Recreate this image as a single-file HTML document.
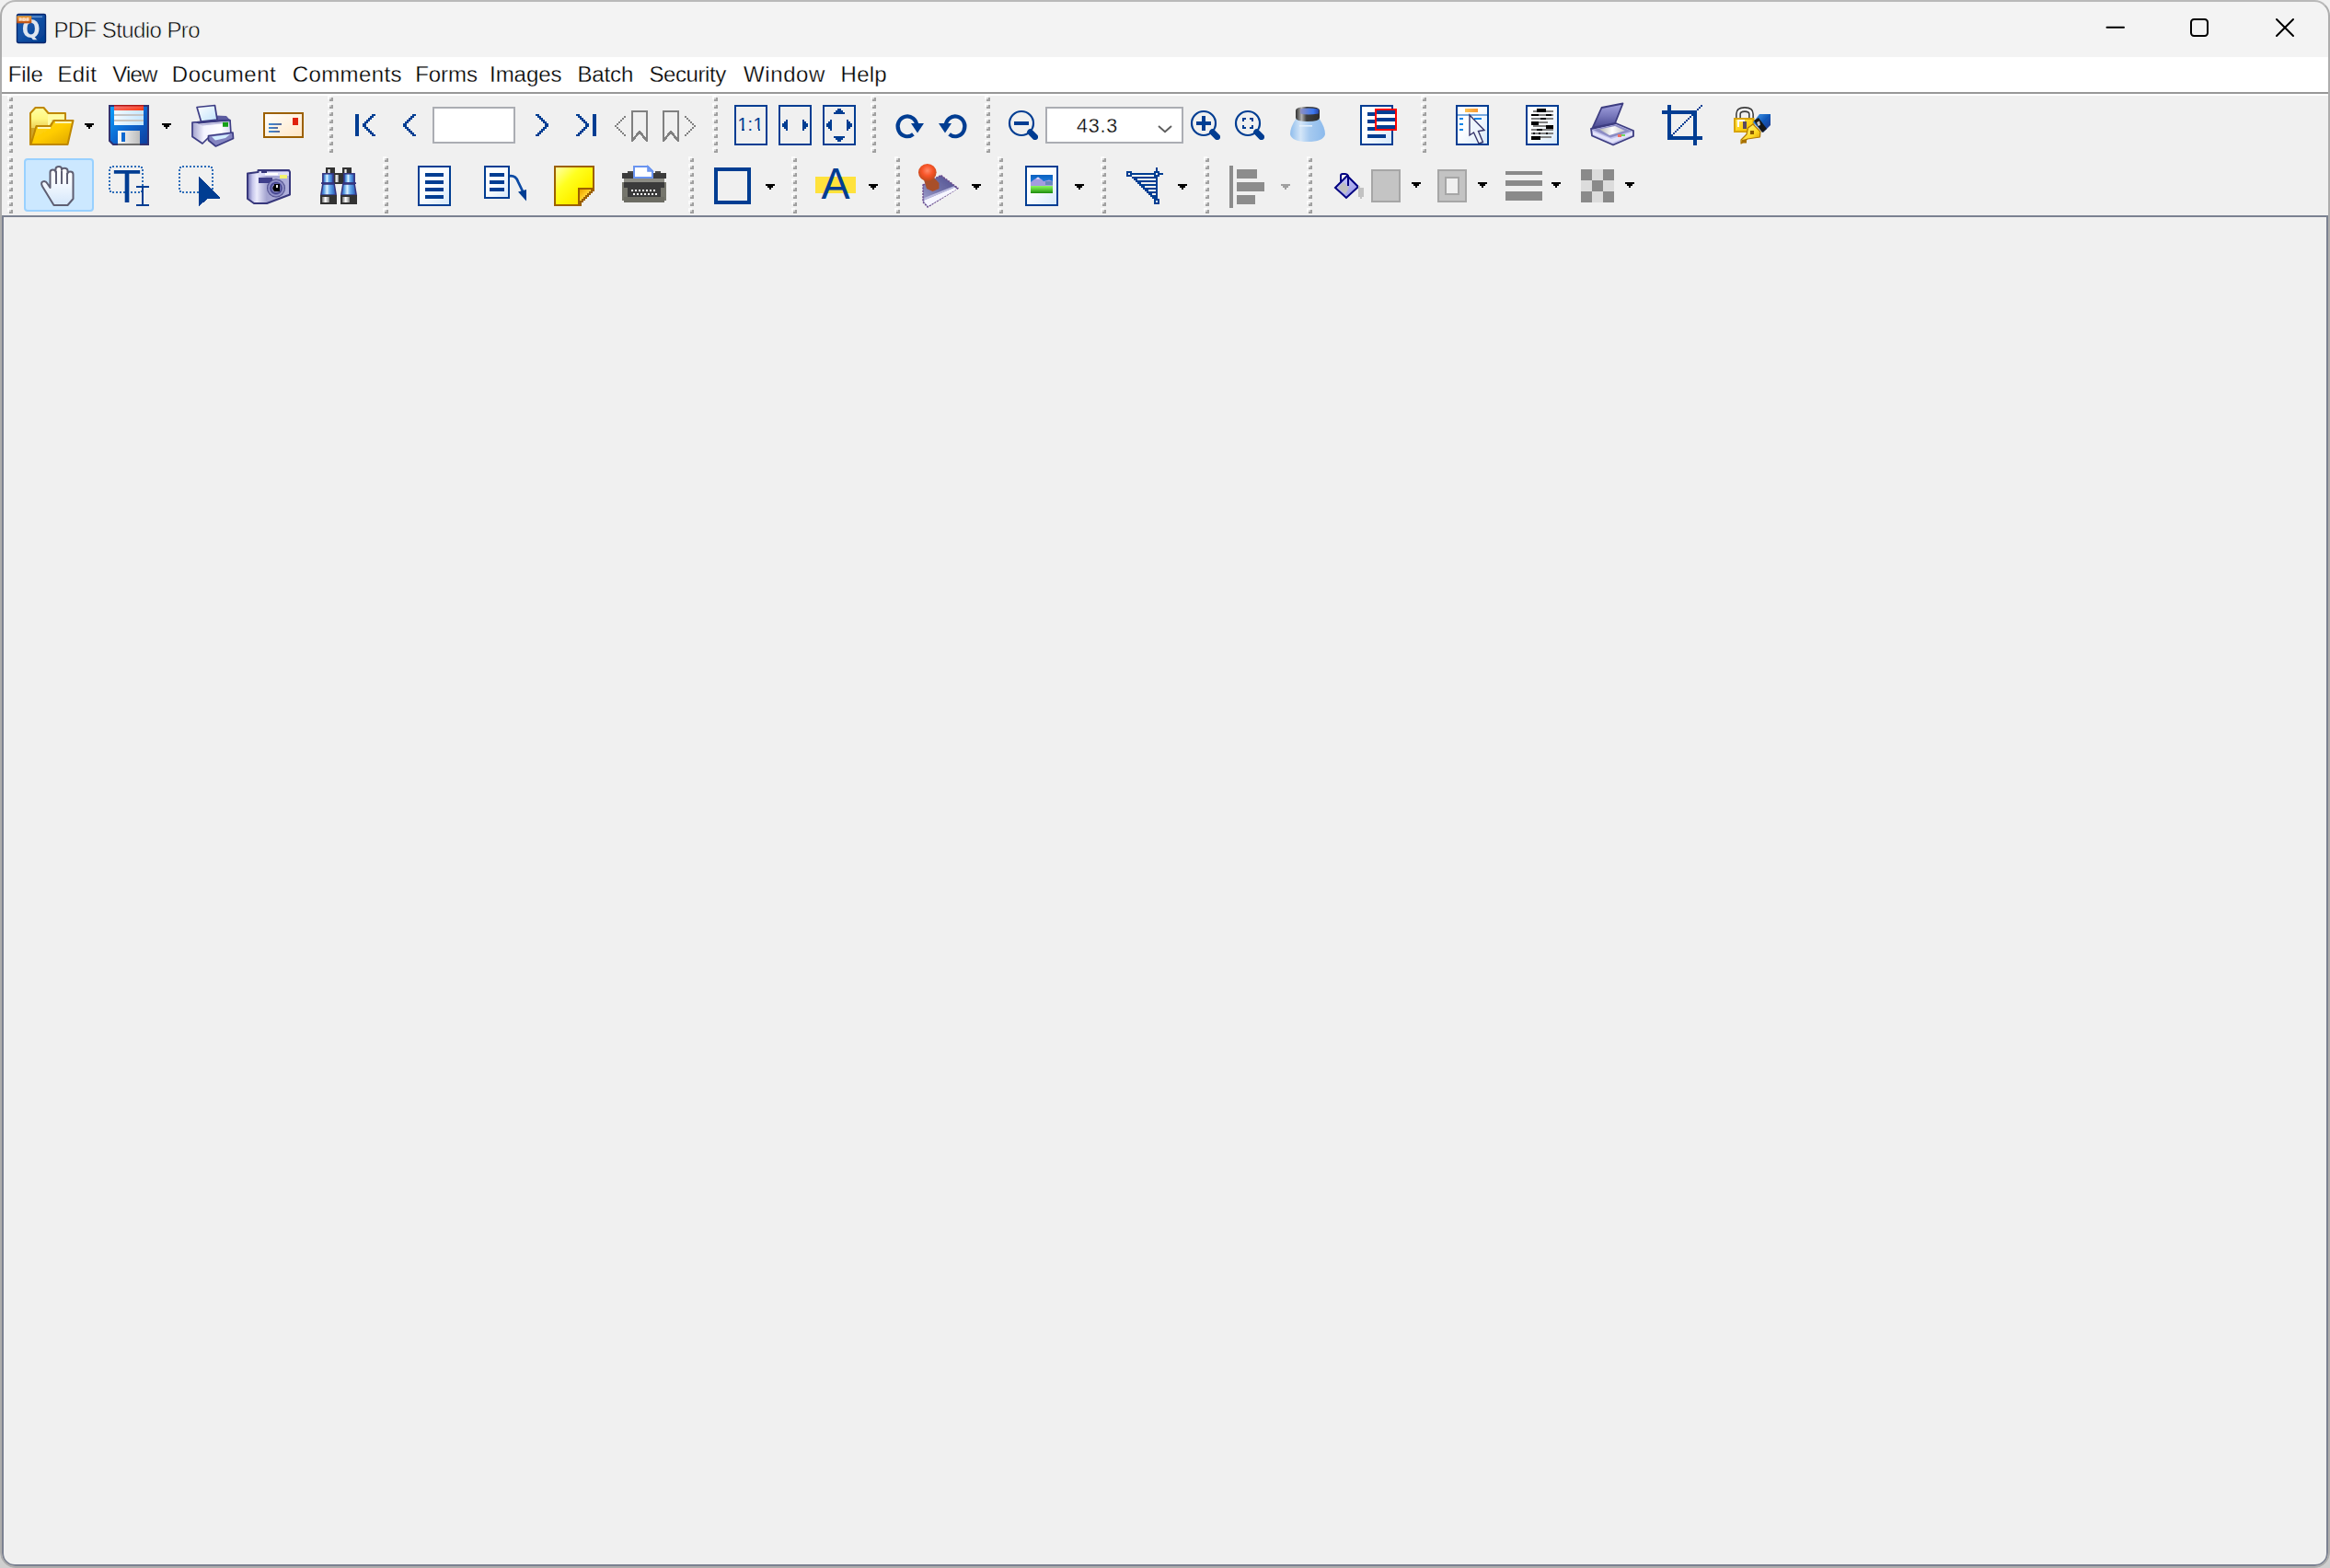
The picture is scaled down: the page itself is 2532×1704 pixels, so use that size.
<!DOCTYPE html>
<html lang="en"><head><meta charset="utf-8"><title>PDF Studio Pro</title>
<style>
html,body{margin:0;padding:0;}
body{width:2532px;height:1704px;position:relative;overflow:hidden;background:#dcdcdc;font-family:"Liberation Sans",sans-serif;}
.abs{position:absolute;}
#cornerT{left:0;top:0;width:2532px;height:40px;background:#f0f0f0;}
#cornerB{left:0;top:1664px;width:2532px;height:40px;background:#cfcfcf;}
#win{left:0;top:0;width:2532px;height:1704px;border-radius:17px;overflow:hidden;background:#f0f0f0;}
#title{left:0;top:0;width:2532px;height:62px;background:#f3f3f3;}
#menubar{left:0;top:62px;width:2532px;height:38px;background:#fff;}
#sep1{left:0;top:100px;width:2532px;height:2px;background:#989898;}
#sep2{left:0;top:102px;width:2532px;height:2px;background:#fff;}
#panel{left:2px;top:234px;width:2524px;height:1464px;border:2px solid #7b8191;background:#f0f0f0;border-radius:0 0 14px 14px;}
#frame{left:0;top:0;width:2528px;height:1700px;border:2px solid #adadad;border-top-color:#b9b9b9;border-radius:17px;}
#ttl{left:59.5px;top:14px;font-size:23.3px;line-height:36px;color:#000;white-space:nowrap;-webkit-text-stroke:0.55px #f3f3f3;}
.mi{top:67px;font-size:23.3px;line-height:30px;color:#000;white-space:nowrap;-webkit-text-stroke:0.3px #fff;}
svg{position:absolute;overflow:visible;}
#hsel{left:26px;top:172px;width:72px;height:54px;border:2px solid #99d1ff;background:#cce8ff;border-radius:4px;}
</style></head>
<body>
<div class="abs" id="cornerT"></div><div class="abs" id="cornerB"></div>
<div class="abs" id="win">
<div class="abs" id="title"></div>
<div class="abs" id="menubar"></div>
<div class="abs" id="sep1"></div><div class="abs" id="sep2"></div>
<svg class="abs" style="left:18px;top:15px" width="32" height="32" viewBox="0 0 32 32">
<defs><linearGradient id="tiA" x1="0" y1="0" x2="1" y2="1"><stop offset="0" stop-color="#1b5db0"/><stop offset=".45" stop-color="#1452a6"/><stop offset="1" stop-color="#003b8e"/></linearGradient>
<linearGradient id="tiB" x1="0" y1="0" x2="0" y2="1"><stop offset="0" stop-color="#f0a030"/><stop offset=".5" stop-color="#e07a28"/><stop offset="1" stop-color="#b84a10"/></linearGradient>
<filter id="tiF" x="-10%" y="-10%" width="120%" height="120%"><feGaussianBlur stdDeviation="0.45"/></filter></defs>
<rect x="0" y="0" width="32" height="32" fill="#fff" opacity=".0"/>
<g filter="url(#tiF)">
<rect x=".5" y=".5" width="31" height="31" rx="1.5" fill="url(#tiA)" stroke="#00286e" stroke-width="1.4"/>
<rect x="16.5" y="2.6" width="11.5" height="1.3" fill="#8fb4e4" opacity=".75"/>
<clipPath id="tiC"><rect x="0" y="0" width="27.2" height="28.2"/></clipPath>
<g clip-path="url(#tiC)"><text transform="translate(15.6 26.2) scale(0.88 1)" x="0" y="0" text-anchor="middle" font-family="DejaVu Sans, sans-serif" font-weight="bold" font-size="26.6" fill="#dfe6f0">Q</text></g>
<rect x="0.3" y="2.3" width="16" height="8" fill="url(#tiB)"/>
<rect x="2.6" y="4.6" width="11.2" height="3.2" fill="#fbd3b0" opacity=".9"/>
</g>
<text x="2.6" y="7.9" font-family="Liberation Sans, sans-serif" font-size="4.6" font-weight="bold" fill="#ffffff" opacity=".55" textLength="11">PDF</text>
</svg>
<div class="abs" id="ttl" style="left:58.4px;top:13px;font-size:24px;line-height:40px;letter-spacing:-0.58px">PDF Studio Pro</div>
<svg class="abs" style="left:2280px;top:10px" width="240" height="40" viewBox="2280 10 240 40" fill="none" stroke="#000" stroke-width="2" stroke-linecap="round">
<path d="M2289.5 29.8 H2308"/>
<rect x="2381" y="21" width="18" height="18" rx="3.2"/>
<path d="M2474 21 L2492 39 M2492 21 L2474 39"/>
</svg>
<div class="abs mi" style="left:8.7px;top:61px;font-size:24px;line-height:40px;letter-spacing:-0.2px">File</div>
<div class="abs mi" style="left:62.4px;top:61px;font-size:24px;line-height:40px;letter-spacing:0.37px">Edit</div>
<div class="abs mi" style="left:122.3px;top:61px;font-size:24px;line-height:40px;letter-spacing:-0.87px">View</div>
<div class="abs mi" style="left:186.8px;top:61px;font-size:24px;line-height:40px;letter-spacing:0.51px">Document</div>
<div class="abs mi" style="left:317.7px;top:61px;font-size:24px;line-height:40px;letter-spacing:0.41px">Comments</div>
<div class="abs mi" style="left:451.2px;top:61px;font-size:24px;line-height:40px;letter-spacing:-0.05px">Forms</div>
<div class="abs mi" style="left:532.0px;top:61px;font-size:24px;line-height:40px;letter-spacing:-0.04px">Images</div>
<div class="abs mi" style="left:627.4px;top:61px;font-size:24px;line-height:40px;letter-spacing:-0.12px">Batch</div>
<div class="abs mi" style="left:705.4px;top:61px;font-size:24px;line-height:40px;letter-spacing:-0.4px">Security</div>
<div class="abs mi" style="left:808.0px;top:61px;font-size:24px;line-height:40px;letter-spacing:0.6px">Window</div>
<div class="abs mi" style="left:913.6px;top:61px;font-size:24px;line-height:40px;letter-spacing:0.23px">Help</div>
<div class="abs" id="panel"></div>
<svg class="abs" style="left:0;top:104px" width="2532" height="130" viewBox="0 104 2532 130" shape-rendering="crispEdges">
<defs>
<linearGradient id="docg" x1="0" y1="0" x2="1" y2="1"><stop offset="0" stop-color="#ffffff"/><stop offset=".45" stop-color="#fbfdff"/><stop offset="1" stop-color="#d6e8fa"/></linearGradient>
<filter id="b4" x="-10%" y="-10%" width="120%" height="120%"><feGaussianBlur stdDeviation="0.45"/></filter>
<filter id="b7" x="-10%" y="-10%" width="120%" height="120%"><feGaussianBlur stdDeviation="0.7"/></filter>
<linearGradient id="fdBack" x1="0" y1="0" x2="0" y2="1"><stop offset="0" stop-color="#ffffa4"/><stop offset=".3" stop-color="#fff780"/><stop offset=".55" stop-color="#ecd058"/><stop offset="1" stop-color="#c89c1c"/></linearGradient>
<linearGradient id="fdFront" x1="0" y1="0" x2="1" y2="1"><stop offset="0" stop-color="#ffd820"/><stop offset=".5" stop-color="#ffcc00"/><stop offset="1" stop-color="#dca400"/></linearGradient>
<linearGradient id="svBody" x1="0" y1="0" x2="1" y2="1"><stop offset="0" stop-color="#10a4ff"/><stop offset=".5" stop-color="#0868d0"/><stop offset="1" stop-color="#083c9c"/></linearGradient>
<linearGradient id="svRed" x1="0" y1="0" x2="1" y2="1"><stop offset="0" stop-color="#f08088"/><stop offset="1" stop-color="#ff3a10"/></linearGradient>
<linearGradient id="svLab" x1="0" y1="0" x2="1" y2="0"><stop offset="0" stop-color="#f4faff"/><stop offset="1" stop-color="#c4e6ff"/></linearGradient>
<linearGradient id="svSh" x1="0" y1="0" x2="1" y2="0"><stop offset="0" stop-color="#fbfbfb"/><stop offset=".5" stop-color="#dcdcdc"/><stop offset="1" stop-color="#bcbcbc"/></linearGradient>
<linearGradient id="prPap" x1="0" y1="0" x2="1" y2="1"><stop offset="0" stop-color="#ffffff"/><stop offset="1" stop-color="#bfe2fb"/></linearGradient>
<linearGradient id="prBody" x1="0" y1="0" x2="1" y2="0"><stop offset="0" stop-color="#a0a0cc"/><stop offset=".3" stop-color="#f4f4ff"/><stop offset=".75" stop-color="#ffffff"/><stop offset="1" stop-color="#d8d8f0"/></linearGradient>
<linearGradient id="envg" x1="0" y1="0" x2="1" y2="1"><stop offset="0" stop-color="#ffffff"/><stop offset="1" stop-color="#ffe6c4"/></linearGradient>
<linearGradient id="envl" x1="0" y1="0" x2="1" y2="0"><stop offset="0" stop-color="#3c8ad8"/><stop offset="1" stop-color="#5a6a98"/></linearGradient>
<linearGradient id="lpBody" x1="0" y1="0" x2="1" y2="0"><stop offset="0" stop-color="#8ebcec"/><stop offset=".3" stop-color="#d4e6f8"/><stop offset=".55" stop-color="#a6caf0"/><stop offset="1" stop-color="#8cbaec"/></linearGradient>
<linearGradient id="lpCap" x1="0" y1="0" x2="1" y2="0"><stop offset="0" stop-color="#303030"/><stop offset=".25" stop-color="#b0b0b0"/><stop offset=".45" stop-color="#404040"/><stop offset="1" stop-color="#2c2c2c"/></linearGradient>
<linearGradient id="lpLens" x1="0" y1="0" x2="1" y2="0"><stop offset="0" stop-color="#9090c0"/><stop offset=".7" stop-color="#3c78f0"/><stop offset="1" stop-color="#2848a8"/></linearGradient>
<linearGradient id="org" x1="0" y1="0" x2="1" y2="0"><stop offset="0" stop-color="#fbc658"/><stop offset="1" stop-color="#fb9830"/></linearGradient>
<linearGradient id="scLid" x1="0" y1="0" x2="0" y2="1"><stop offset="0" stop-color="#a4a4e0"/><stop offset=".5" stop-color="#7878bc"/><stop offset="1" stop-color="#484890"/></linearGradient>
<linearGradient id="scGlass" x1="0" y1="0" x2="1" y2="0"><stop offset="0" stop-color="#b4b4b0"/><stop offset=".5" stop-color="#ffffff"/><stop offset="1" stop-color="#c4c4c8"/></linearGradient>
<linearGradient id="lkBody" x1="0" y1="0" x2="1" y2="1"><stop offset="0" stop-color="#ffe860"/><stop offset=".6" stop-color="#ffd010"/><stop offset="1" stop-color="#f0b400"/></linearGradient>
<linearGradient id="pnBlue" x1="0" y1="0" x2="1" y2="1"><stop offset="0" stop-color="#4aa0f0"/><stop offset=".5" stop-color="#1058b8"/><stop offset="1" stop-color="#283080"/></linearGradient>
<linearGradient id="pnNib" x1="0" y1="0" x2="1" y2="1"><stop offset="0" stop-color="#ffffa0"/><stop offset=".6" stop-color="#ffd820"/><stop offset="1" stop-color="#c88800"/></linearGradient>
</defs>
<path d="M8 104h4v4h-4zM8 112h4v4h-4zM8 120h4v4h-4zM8 128h4v4h-4zM8 136h4v4h-4zM8 144h4v4h-4zM8 152h4v4h-4zM8 160h4v4h-4z" fill="#fbfbfb"/><path d="M10 106h4v4h-4zM10 114h4v4h-4zM10 122h4v4h-4zM10 130h4v4h-4zM10 138h4v4h-4zM10 146h4v4h-4zM10 154h4v4h-4zM10 162h4v4h-4z" fill="#a0a0a0"/><path d="M10 106h2v2h-2zM10 114h2v2h-2zM10 122h2v2h-2zM10 130h2v2h-2zM10 138h2v2h-2zM10 146h2v2h-2zM10 154h2v2h-2zM10 162h2v2h-2z" fill="#d4d4d4"/>
<path d="M356 104h4v4h-4zM356 112h4v4h-4zM356 120h4v4h-4zM356 128h4v4h-4zM356 136h4v4h-4zM356 144h4v4h-4zM356 152h4v4h-4zM356 160h4v4h-4z" fill="#fbfbfb"/><path d="M358 106h4v4h-4zM358 114h4v4h-4zM358 122h4v4h-4zM358 130h4v4h-4zM358 138h4v4h-4zM358 146h4v4h-4zM358 154h4v4h-4zM358 162h4v4h-4z" fill="#a0a0a0"/><path d="M358 106h2v2h-2zM358 114h2v2h-2zM358 122h2v2h-2zM358 130h2v2h-2zM358 138h2v2h-2zM358 146h2v2h-2zM358 154h2v2h-2zM358 162h2v2h-2z" fill="#d4d4d4"/>
<path d="M774 104h4v4h-4zM774 112h4v4h-4zM774 120h4v4h-4zM774 128h4v4h-4zM774 136h4v4h-4zM774 144h4v4h-4zM774 152h4v4h-4zM774 160h4v4h-4z" fill="#fbfbfb"/><path d="M776 106h4v4h-4zM776 114h4v4h-4zM776 122h4v4h-4zM776 130h4v4h-4zM776 138h4v4h-4zM776 146h4v4h-4zM776 154h4v4h-4zM776 162h4v4h-4z" fill="#a0a0a0"/><path d="M776 106h2v2h-2zM776 114h2v2h-2zM776 122h2v2h-2zM776 130h2v2h-2zM776 138h2v2h-2zM776 146h2v2h-2zM776 154h2v2h-2zM776 162h2v2h-2z" fill="#d4d4d4"/>
<path d="M946 104h4v4h-4zM946 112h4v4h-4zM946 120h4v4h-4zM946 128h4v4h-4zM946 136h4v4h-4zM946 144h4v4h-4zM946 152h4v4h-4zM946 160h4v4h-4z" fill="#fbfbfb"/><path d="M948 106h4v4h-4zM948 114h4v4h-4zM948 122h4v4h-4zM948 130h4v4h-4zM948 138h4v4h-4zM948 146h4v4h-4zM948 154h4v4h-4zM948 162h4v4h-4z" fill="#a0a0a0"/><path d="M948 106h2v2h-2zM948 114h2v2h-2zM948 122h2v2h-2zM948 130h2v2h-2zM948 138h2v2h-2zM948 146h2v2h-2zM948 154h2v2h-2zM948 162h2v2h-2z" fill="#d4d4d4"/>
<path d="M1070 104h4v4h-4zM1070 112h4v4h-4zM1070 120h4v4h-4zM1070 128h4v4h-4zM1070 136h4v4h-4zM1070 144h4v4h-4zM1070 152h4v4h-4zM1070 160h4v4h-4z" fill="#fbfbfb"/><path d="M1072 106h4v4h-4zM1072 114h4v4h-4zM1072 122h4v4h-4zM1072 130h4v4h-4zM1072 138h4v4h-4zM1072 146h4v4h-4zM1072 154h4v4h-4zM1072 162h4v4h-4z" fill="#a0a0a0"/><path d="M1072 106h2v2h-2zM1072 114h2v2h-2zM1072 122h2v2h-2zM1072 130h2v2h-2zM1072 138h2v2h-2zM1072 146h2v2h-2zM1072 154h2v2h-2zM1072 162h2v2h-2z" fill="#d4d4d4"/>
<path d="M1544 104h4v4h-4zM1544 112h4v4h-4zM1544 120h4v4h-4zM1544 128h4v4h-4zM1544 136h4v4h-4zM1544 144h4v4h-4zM1544 152h4v4h-4zM1544 160h4v4h-4z" fill="#fbfbfb"/><path d="M1546 106h4v4h-4zM1546 114h4v4h-4zM1546 122h4v4h-4zM1546 130h4v4h-4zM1546 138h4v4h-4zM1546 146h4v4h-4zM1546 154h4v4h-4zM1546 162h4v4h-4z" fill="#a0a0a0"/><path d="M1546 106h2v2h-2zM1546 114h2v2h-2zM1546 122h2v2h-2zM1546 130h2v2h-2zM1546 138h2v2h-2zM1546 146h2v2h-2zM1546 154h2v2h-2zM1546 162h2v2h-2z" fill="#d4d4d4"/>
<path d="M92 134h10v2h-10zM94 136h6v2h-6zM96 138h2v2h-2z" fill="#000"/><path d="M176 134h10v2h-10zM178 136h6v2h-6zM180 138h2v2h-2z" fill="#000"/>
<g shape-rendering="geometricPrecision">
<g filter="url(#b4)"><path d="M33 157 V123 L38.5 117 H47.5 L52.5 123 H71 V134 H55 L33 157Z" fill="url(#fdBack)" stroke="#bf8800" stroke-width="2" stroke-linejoin="round"/><path d="M34 139 H39.5 L34 156 Z" fill="#cfa428"/><path d="M52 124.5 H70 V131 H57 L54 136 H52 Z" fill="#fffca4"/><path d="M56 130 H70 V133 H56 Z" fill="#d8c070" opacity=".55"/><path d="M33.5 157 L39.5 137 H55 L58.5 131 H79.5 L73.5 157 Z" fill="url(#fdFront)" stroke="#bf8800" stroke-width="2" stroke-linejoin="round"/><path d="M60 133 H77.5" stroke="#fff6b8" stroke-width="2"/><path d="M41 139 H55" stroke="#fff6b8" stroke-width="2"/></g>
<g filter="url(#b4)"><path d="M119 115 H161 V157 H123 L119 153 Z" fill="url(#svBody)" stroke="#303070" stroke-width="2" stroke-linejoin="miter"/><rect x="124" y="114" width="32" height="22" fill="url(#svLab)"/><rect x="124" y="114" width="32" height="6" fill="url(#svRed)"/><rect x="124" y="114" width="32" height="1.5" fill="#b01818"/><rect x="124" y="124" width="32" height="2" fill="#c4c4c4"/><rect x="124" y="130" width="32" height="2" fill="#c8c4c0"/><rect x="128" y="142" width="24" height="16" fill="url(#svSh)"/><rect x="128" y="156" width="24" height="2" fill="#6c6c6c"/><rect x="132" y="144" width="4" height="10" fill="#0868d0"/></g>
<g filter="url(#b4)"><path d="M235 125.5 L246 126 L250.5 131 L250.5 134 L236 134 Z" fill="#5c5ca0"/><path d="M209 133 L250 130.5 L251 146 L226 150 L220 156 L209 148.5 Z" fill="url(#prBody)" stroke="#3c3c84" stroke-width="1.7" stroke-linejoin="round"/><path d="M210 132.3 L250 129.8 L250 131.6 L216 134.6 Z" fill="#3c3c84"/><path d="M216 135 L249 132 L249 133.5 L220 136.4 Z" fill="#b8b8dc"/><path d="M214 116.5 L233.5 114.5 L236 130 L218.5 132 Z" fill="url(#prPap)" stroke="#3c3c84" stroke-width="1.7" stroke-linejoin="round"/><rect x="242" y="132.8" width="6" height="5" fill="#18a018"/><path d="M226.5 147.5 L253 144 L253.5 150.5 L234.5 159 L226.5 152.5 Z" fill="#8484c0" stroke="#3c3c84" stroke-width="1.7" stroke-linejoin="round"/><path d="M230 148.5 L250 146 L245 150 L234 152.5 Z" fill="#d4eeff"/></g>
<rect x="287" y="123" width="42" height="26" fill="url(#envg)" stroke="#9c6000" stroke-width="2"/><rect x="318" y="128" width="6" height="8" fill="#e02010" filter="url(#b4)"/><rect x="292" y="134" width="14" height="2" fill="url(#envl)"/><rect x="292" y="138" width="10" height="2" fill="url(#envl)"/><rect x="292" y="142" width="12" height="2" fill="url(#envl)"/>
</g>
<rect x="386" y="124" width="4" height="24" fill="#003d92"/><path d="M404 124h4v2h-4zM402 126h4v2h-4zM400 128h4v2h-4zM398 130h4v2h-4zM396 132h4v2h-4zM394 134h4v2h-4zM394 136h4v2h-4zM396 138h4v2h-4zM398 140h4v2h-4zM400 142h4v2h-4zM402 144h4v2h-4zM404 146h4v2h-4z" fill="#003d92"/><path d="M448 124h4v2h-4zM446 126h4v2h-4zM444 128h4v2h-4zM442 130h4v2h-4zM440 132h4v2h-4zM438 134h4v2h-4zM438 136h4v2h-4zM440 138h4v2h-4zM442 140h4v2h-4zM444 142h4v2h-4zM446 144h4v2h-4zM448 146h4v2h-4z" fill="#003d92"/><rect x="471" y="117" width="88" height="38" fill="#fff" stroke="#abadb3" stroke-width="2"/><path d="M582 124h4v2h-4zM584 126h4v2h-4zM586 128h4v2h-4zM588 130h4v2h-4zM590 132h4v2h-4zM592 134h4v2h-4zM592 136h4v2h-4zM590 138h4v2h-4zM588 140h4v2h-4zM586 142h4v2h-4zM584 144h4v2h-4zM582 146h4v2h-4z" fill="#003d92"/><path d="M626 124h4v2h-4zM628 126h4v2h-4zM630 128h4v2h-4zM632 130h4v2h-4zM634 132h4v2h-4zM636 134h4v2h-4zM636 136h4v2h-4zM634 138h4v2h-4zM632 140h4v2h-4zM630 142h4v2h-4zM628 144h4v2h-4zM626 146h4v2h-4z" fill="#003d92"/><rect x="644" y="124" width="4" height="24" fill="#003d92"/><path d="M678 126h2v2h-2zM676 128h2v2h-2zM674 130h2v2h-2zM672 132h2v2h-2zM670 134h2v2h-2zM668 136h2v2h-2zM670 138h2v2h-2zM672 140h2v2h-2zM674 142h2v2h-2zM676 144h2v2h-2zM678 146h2v2h-2z" fill="#808080"/><path d="M687 153.5 V121 H703 V153.5" fill="none" stroke="#808080" stroke-width="2"/><path d="M687.5 152 L695 143.5 L702.5 152" fill="none" stroke="#808080" stroke-width="2.7" stroke-linejoin="miter"/><path d="M721 153.5 V121 H737 V153.5" fill="none" stroke="#808080" stroke-width="2"/><path d="M721.5 152 L729 143.5 L736.5 152" fill="none" stroke="#808080" stroke-width="2.7" stroke-linejoin="miter"/><path d="M744 126h2v2h-2zM746 128h2v2h-2zM748 130h2v2h-2zM750 132h2v2h-2zM752 134h2v2h-2zM754 136h2v2h-2zM752 138h2v2h-2zM750 140h2v2h-2zM748 142h2v2h-2zM746 144h2v2h-2zM744 146h2v2h-2z" fill="#808080"/><rect x="799" y="115" width="34" height="42" fill="none" stroke="#003d92" stroke-width="2"/><rect x="847" y="115" width="34" height="42" fill="none" stroke="#003d92" stroke-width="2"/><rect x="895" y="115" width="34" height="42" fill="none" stroke="#003d92" stroke-width="2"/><text x="801.5 812.6 818.5" y="142.2" font-family="Liberation Sans, sans-serif" font-size="19.6" fill="#003d92">1:1</text><rect x="802" y="139.6" width="4" height="3" fill="#f0f0f0"/><rect x="809" y="139.6" width="4" height="3" fill="#f0f0f0"/><rect x="819" y="139.6" width="4.6" height="3" fill="#f0f0f0"/><rect x="826.4" y="139.6" width="3.6" height="3" fill="#f0f0f0"/><path d="M854 130h2v12h-2zM852 132h2v8h-2zM850 134h2v4h-2zM872 130h2v12h-2zM874 132h2v8h-2zM876 134h2v4h-2z" fill="#003d92"/><path d="M902 130h2v12h-2zM900 132h2v8h-2zM898 134h2v4h-2zM920 130h2v12h-2zM922 132h2v8h-2zM924 134h2v4h-2zM906 122h12v2h-12zM908 120h8v2h-8zM910 118h4v2h-4zM906 148h12v2h-12zM908 150h8v2h-8zM910 152h4v2h-4z" fill="#003d92"/>
<g shape-rendering="geometricPrecision"><g filter="url(#b4)"><path d="M996.4 137 A10.4 10.9 0 1 0 992.4 145.9" fill="none" stroke="#003d92" stroke-width="4.2"/><path d="M990 134 H1004 L997 144.5 Z" fill="#003d92"/><path d="M1027.6 137 A10.4 10.9 0 1 1 1031.6 145.9" fill="none" stroke="#003d92" stroke-width="4.2"/><path d="M1020 134 H1034 L1027 144.5 Z" fill="#003d92"/></g></g>
<g shape-rendering="geometricPrecision"><g filter="url(#b4)"><circle cx="1110" cy="134" r="13" fill="none" stroke="#003d92" stroke-width="2.2"/><path d="M1119.5 143.5 L1124.8 148.8" stroke="#003d92" stroke-width="6.6" stroke-linecap="round"/></g><rect x="1102" y="132" width="16" height="4" fill="#003d92"/><rect x="1137" y="117" width="148" height="38" fill="#fff" stroke="#abadb3" stroke-width="2"/><path d="M1259 137 L1266 143.3 L1273 137" fill="none" stroke="#5e5e5e" stroke-width="1.9"/><g filter="url(#b4)"><circle cx="1308" cy="134" r="13" fill="none" stroke="#003d92" stroke-width="2.2"/><path d="M1317.5 143.5 L1322.8 148.8" stroke="#003d92" stroke-width="6.6" stroke-linecap="round"/></g><rect x="1300" y="132" width="16" height="4" fill="#003d92"/><rect x="1306" y="126" width="4" height="16" fill="#003d92"/><g filter="url(#b4)"><circle cx="1356" cy="134" r="13" fill="none" stroke="#003d92" stroke-width="2.2"/><path d="M1365.5 143.5 L1370.8 148.8" stroke="#003d92" stroke-width="6.6" stroke-linecap="round"/></g><path d="M1350 128h4v2h-4zM1350 130h2v2h-2zM1358 128h4v2h-4zM1360 130h2v2h-2zM1350 136h2v2h-2zM1350 138h4v2h-4zM1360 136h2v2h-2zM1358 138h4v2h-4z" fill="#003d92"/></g>
<g shape-rendering="geometricPrecision"><g filter="url(#b7)"><path d="M1409 128 H1433 Q1440 138 1440 146 Q1438 154 1421 154 Q1404 154 1402 146 Q1402 138 1409 128 Z" fill="url(#lpBody)"/><path d="M1408 120 Q1408 116 1421 116 Q1434 116 1434 120 V128 Q1434 132 1421 132 Q1408 132 1408 128 Z" fill="url(#lpCap)"/><path d="M1413 118.5 Q1421 116.5 1433 118.5 V123.5 Q1421 125.5 1413 123.5 Z" fill="url(#lpLens)"/><rect x="1412" y="136" width="14" height="1.6" fill="#e4f0fc"/></g></g>
<rect x="1479" y="115" width="34" height="42" fill="url(#docg)" stroke="#003d92" stroke-width="2"/><rect x="1486" y="122" width="24" height="4" fill="#003d92"/><rect x="1486" y="130" width="24" height="4" fill="#003d92"/><rect x="1486" y="138" width="24" height="4" fill="#003d92"/><rect x="1486" y="146" width="20" height="4" fill="#003d92"/><rect x="1495" y="119" width="22" height="22" fill="#fff" stroke="#ff0000" stroke-width="2"/><rect x="1496" y="120" width="20" height="4" fill="#003d92"/><rect x="1496" y="128" width="20" height="4" fill="#003d92"/><rect x="1496" y="136" width="20" height="4" fill="#003d92"/><g shape-rendering="geometricPrecision"><rect x="1583" y="115" width="34" height="42" fill="url(#docg)" stroke="#003d92" stroke-width="2"/><rect x="1592" y="118" width="14" height="4" fill="url(#org)"/><rect x="1584" y="124" width="32" height="2" fill="#78aae0"/><rect x="1586" y="128" width="4" height="2" fill="#0a84e8"/><rect x="1586" y="134" width="4" height="2" fill="#0a84e8"/><rect x="1586" y="140" width="4" height="2" fill="#0a84e8"/><rect x="1602" y="128" width="8" height="2" fill="#0a84e8"/><path d="M1597 125 V147 L1601.5 144 L1607 156 L1611.5 154.5 L1606.5 142.5 L1613 141.5 Z" fill="#eef5fd" stroke="#34346a" stroke-width="1.4" stroke-linejoin="miter" filter="url(#b4)"/></g><rect x="1659" y="115" width="34" height="42" fill="url(#docg)" stroke="#003d92" stroke-width="2"/><rect x="1666" y="120" width="22" height="2" fill="#808080"/><rect x="1670" y="118" width="10" height="4" fill="#000"/><rect x="1664" y="124" width="24" height="2" fill="#808080"/><rect x="1664" y="124" width="8" height="2" fill="#000"/><rect x="1680" y="124" width="6" height="2" fill="#000"/><rect x="1664" y="128" width="24" height="2" fill="#808080"/><rect x="1674" y="128" width="6" height="2" fill="#000"/><rect x="1672" y="132" width="10" height="2" fill="#808080"/><rect x="1664" y="132" width="8" height="4" fill="#000"/><rect x="1666" y="136" width="14" height="2" fill="#808080"/><rect x="1680" y="136" width="8" height="4" fill="#000"/><rect x="1664" y="140" width="24" height="2" fill="#808080"/><rect x="1670" y="140" width="6" height="2" fill="#000"/><rect x="1664" y="144" width="24" height="2" fill="#808080"/><rect x="1666" y="144" width="2" height="2" fill="#000"/><rect x="1672" y="144" width="2" height="2" fill="#000"/><rect x="1680" y="144" width="2" height="2" fill="#000"/><rect x="1674" y="148" width="12" height="2" fill="#808080"/><rect x="1664" y="148" width="10" height="4" fill="#000"/>
<g shape-rendering="geometricPrecision"><g filter="url(#b4)"><path d="M1729 140 L1756 134 L1775 142 L1775 148 L1753 157.5 L1730 147.5 Z" fill="#c4c4ee" stroke="#3c3c80" stroke-width="1.8" stroke-linejoin="round"/><path d="M1731 141 L1756 135.5 L1773 142.5 L1750 149.5 Z" fill="#8c8cc4"/><path d="M1738 140.5 L1755 137 L1766 142 L1749 147 Z" fill="url(#scGlass)"/><path d="M1731 146 L1752 155 L1774 146.5 L1774 143.5 L1751 151 L1731 143 Z" fill="#e4e4fa"/><rect x="1758" y="146" width="4" height="3" fill="#f07060"/><rect x="1762" y="146" width="4" height="2" fill="#70d860"/><path d="M1740.5 117 L1763.5 112.5 L1755 134 L1730.5 139 Z" fill="url(#scLid)" stroke="#3c3c80" stroke-width="1.8" stroke-linejoin="round"/></g></g>
<path d="M1848 114h2v2h-2zM1846 116h2v2h-2zM1844 118h2v2h-2zM1842 120h2v2h-2zM1840 122h2v2h-2zM1838 124h2v2h-2zM1836 126h2v2h-2zM1834 128h2v2h-2zM1832 130h2v2h-2zM1830 132h2v2h-2zM1828 134h2v2h-2zM1826 136h2v2h-2zM1824 138h2v2h-2zM1822 140h2v2h-2zM1820 142h2v2h-2zM1818 144h2v2h-2zM1816 146h2v2h-2z" fill="#003d92"/><rect x="1812" y="114" width="4" height="38" fill="#003d92"/><rect x="1806" y="120" width="38" height="4" fill="#003d92"/><rect x="1840" y="120" width="4" height="38" fill="#003d92"/><rect x="1812" y="148" width="38" height="4" fill="#003d92"/>
<g shape-rendering="geometricPrecision"><g filter="url(#b4)"><path d="M1889 129 V124 Q1889 119 1896 119 Q1903 119 1903 124 V129" fill="none" stroke="#3c3c3c" stroke-width="5.8"/><path d="M1889 129 V124 Q1889 119 1896 119 Q1903 119 1903 124 V129" fill="none" stroke="#f8f8f8" stroke-width="2.7"/><rect x="1885" y="129" width="20.5" height="14" fill="url(#lkBody)" stroke="#d8a400" stroke-width="2"/><path d="M1889 138 V131 H1896" fill="none" stroke="#fff" stroke-width="2"/><rect x="1894" y="132" width="4" height="8" fill="#5a4a60"/><path d="M1912 124 H1924 V136 L1916 144 L1905 133 Z" fill="url(#pnBlue)"/><path d="M1912 124 H1924 V136 L1921.5 138.5 L1909.5 126.5 Z" fill="none"/><path d="M1906 131 L1911 128 L1920 140 L1915 144 Z" fill="#181818"/><path d="M1909 133 L1912 131.5 L1913 136 L1910.5 137 Z" fill="#c8c8c8"/><path d="M1905 135 L1913 143 L1912.5 149 L1899 151 L1892 156 L1892 152 L1898 146 L1899.5 139 Z" fill="url(#pnNib)" stroke="#b07800" stroke-width="1.2" stroke-linejoin="round"/><path d="M1892 155.5 L1898 155.5 L1898 151 L1893 152 Z" fill="#a87000"/><rect x="1902" y="142" width="4" height="4" fill="#8a5a00"/></g></g>
</svg>

<div class="abs" style="left:1170px;top:116.6px;font-size:21.5px;line-height:40px;letter-spacing:0.8px;color:#000;white-space:nowrap;-webkit-text-stroke:0.3px #fff">43.3</div>
<div class="abs" id="hsel"></div>
<svg class="abs" style="left:0;top:168px" width="2532" height="66" viewBox="0 168 2532 66" shape-rendering="crispEdges">
<defs>
<linearGradient id="hnd" x1="0" y1="0" x2="0" y2="1"><stop offset="0" stop-color="#ffffff"/><stop offset=".4" stop-color="#f6faff"/><stop offset="1" stop-color="#d4e6fa"/></linearGradient>
<linearGradient id="camB" x1="0" y1="0" x2="1" y2="0"><stop offset="0" stop-color="#6c6cb0"/><stop offset=".12" stop-color="#c8c8ec"/><stop offset=".22" stop-color="#ececfc"/><stop offset=".45" stop-color="#a4a4d0"/><stop offset="1" stop-color="#b0b0dc"/></linearGradient>
<radialGradient id="camL" cx=".5" cy=".5" r=".5"><stop offset="0" stop-color="#000"/><stop offset=".32" stop-color="#000"/><stop offset=".4" stop-color="#8080b8"/><stop offset=".6" stop-color="#40408c"/><stop offset=".78" stop-color="#a0a0d4"/><stop offset="1" stop-color="#38387c"/></radialGradient>
<linearGradient id="binB" x1="0" y1="0" x2="1" y2="0"><stop offset="0" stop-color="#3a56ac"/><stop offset=".18" stop-color="#4c94e0"/><stop offset=".4" stop-color="#dcf2ff"/><stop offset=".58" stop-color="#6cb0f0"/><stop offset=".82" stop-color="#3c78cc"/><stop offset="1" stop-color="#34449c"/></linearGradient>
<linearGradient id="binS" x1="0" y1="0" x2="1" y2="0"><stop offset="0" stop-color="#707070"/><stop offset=".45" stop-color="#ffffff"/><stop offset="1" stop-color="#808080"/></linearGradient>
<linearGradient id="stk" x1="0" y1="0" x2="1" y2="1"><stop offset="0" stop-color="#ffffb4"/><stop offset=".35" stop-color="#ffff20"/><stop offset=".6" stop-color="#fff400"/><stop offset="1" stop-color="#ffd000"/></linearGradient>
<linearGradient id="stkF" x1="0" y1="0" x2=".6" y2=".6"><stop offset="0" stop-color="#e8a000"/><stop offset=".5" stop-color="#ffc820"/><stop offset="1" stop-color="#ffe878"/></linearGradient>
<radialGradient id="stB" cx=".5" cy=".4" r=".6"><stop offset="0" stop-color="#ff8a68"/><stop offset=".5" stop-color="#f85428"/><stop offset="1" stop-color="#c04a1c"/></radialGradient>
<linearGradient id="stBase" x1="1" y1="0" x2="0" y2="1"><stop offset="0" stop-color="#4c4c8e"/><stop offset=".5" stop-color="#7070a8"/><stop offset="1" stop-color="#a8a8d2"/></linearGradient>
<linearGradient id="sky" x1="0" y1="0" x2="0" y2="1"><stop offset="0" stop-color="#0860c0"/><stop offset="1" stop-color="#2a8ae8"/></linearGradient>
<linearGradient id="grs" x1="0" y1="0" x2="0" y2="1"><stop offset="0" stop-color="#8cf860"/><stop offset=".5" stop-color="#58c838"/><stop offset="1" stop-color="#1c8c10"/></linearGradient>
<linearGradient id="bkt" x1="0" y1="0" x2="1" y2="1"><stop offset="0" stop-color="#d8d8ff"/><stop offset="1" stop-color="#8c8ce0"/></linearGradient>
<linearGradient id="docg2" x1="0" y1="0" x2="1" y2="1"><stop offset="0" stop-color="#ffffff"/><stop offset=".45" stop-color="#fbfdff"/><stop offset="1" stop-color="#d6e8fa"/></linearGradient>
<filter id="c4" x="-10%" y="-10%" width="120%" height="120%"><feGaussianBlur stdDeviation="0.45"/></filter>
<filter id="c7" x="-10%" y="-10%" width="120%" height="120%"><feGaussianBlur stdDeviation="0.7"/></filter>
</defs>
<path d="M8 170h4v4h-4zM8 178h4v4h-4zM8 186h4v4h-4zM8 194h4v4h-4zM8 202h4v4h-4zM8 210h4v4h-4zM8 218h4v4h-4zM8 226h4v4h-4z" fill="#fbfbfb"/><path d="M10 172h4v4h-4zM10 180h4v4h-4zM10 188h4v4h-4zM10 196h4v4h-4zM10 204h4v4h-4zM10 212h4v4h-4zM10 220h4v4h-4zM10 228h4v4h-4z" fill="#a0a0a0"/><path d="M10 172h2v2h-2zM10 180h2v2h-2zM10 188h2v2h-2zM10 196h2v2h-2zM10 204h2v2h-2zM10 212h2v2h-2zM10 220h2v2h-2zM10 228h2v2h-2z" fill="#d4d4d4"/>
<path d="M416 170h4v4h-4zM416 178h4v4h-4zM416 186h4v4h-4zM416 194h4v4h-4zM416 202h4v4h-4zM416 210h4v4h-4zM416 218h4v4h-4zM416 226h4v4h-4z" fill="#fbfbfb"/><path d="M418 172h4v4h-4zM418 180h4v4h-4zM418 188h4v4h-4zM418 196h4v4h-4zM418 204h4v4h-4zM418 212h4v4h-4zM418 220h4v4h-4zM418 228h4v4h-4z" fill="#a0a0a0"/><path d="M418 172h2v2h-2zM418 180h2v2h-2zM418 188h2v2h-2zM418 196h2v2h-2zM418 204h2v2h-2zM418 212h2v2h-2zM418 220h2v2h-2zM418 228h2v2h-2z" fill="#d4d4d4"/>
<path d="M748 170h4v4h-4zM748 178h4v4h-4zM748 186h4v4h-4zM748 194h4v4h-4zM748 202h4v4h-4zM748 210h4v4h-4zM748 218h4v4h-4zM748 226h4v4h-4z" fill="#fbfbfb"/><path d="M750 172h4v4h-4zM750 180h4v4h-4zM750 188h4v4h-4zM750 196h4v4h-4zM750 204h4v4h-4zM750 212h4v4h-4zM750 220h4v4h-4zM750 228h4v4h-4z" fill="#a0a0a0"/><path d="M750 172h2v2h-2zM750 180h2v2h-2zM750 188h2v2h-2zM750 196h2v2h-2zM750 204h2v2h-2zM750 212h2v2h-2zM750 220h2v2h-2zM750 228h2v2h-2z" fill="#d4d4d4"/>
<path d="M860 170h4v4h-4zM860 178h4v4h-4zM860 186h4v4h-4zM860 194h4v4h-4zM860 202h4v4h-4zM860 210h4v4h-4zM860 218h4v4h-4zM860 226h4v4h-4z" fill="#fbfbfb"/><path d="M862 172h4v4h-4zM862 180h4v4h-4zM862 188h4v4h-4zM862 196h4v4h-4zM862 204h4v4h-4zM862 212h4v4h-4zM862 220h4v4h-4zM862 228h4v4h-4z" fill="#a0a0a0"/><path d="M862 172h2v2h-2zM862 180h2v2h-2zM862 188h2v2h-2zM862 196h2v2h-2zM862 204h2v2h-2zM862 212h2v2h-2zM862 220h2v2h-2zM862 228h2v2h-2z" fill="#d4d4d4"/>
<path d="M972 170h4v4h-4zM972 178h4v4h-4zM972 186h4v4h-4zM972 194h4v4h-4zM972 202h4v4h-4zM972 210h4v4h-4zM972 218h4v4h-4zM972 226h4v4h-4z" fill="#fbfbfb"/><path d="M974 172h4v4h-4zM974 180h4v4h-4zM974 188h4v4h-4zM974 196h4v4h-4zM974 204h4v4h-4zM974 212h4v4h-4zM974 220h4v4h-4zM974 228h4v4h-4z" fill="#a0a0a0"/><path d="M974 172h2v2h-2zM974 180h2v2h-2zM974 188h2v2h-2zM974 196h2v2h-2zM974 204h2v2h-2zM974 212h2v2h-2zM974 220h2v2h-2zM974 228h2v2h-2z" fill="#d4d4d4"/>
<path d="M1084 170h4v4h-4zM1084 178h4v4h-4zM1084 186h4v4h-4zM1084 194h4v4h-4zM1084 202h4v4h-4zM1084 210h4v4h-4zM1084 218h4v4h-4zM1084 226h4v4h-4z" fill="#fbfbfb"/><path d="M1086 172h4v4h-4zM1086 180h4v4h-4zM1086 188h4v4h-4zM1086 196h4v4h-4zM1086 204h4v4h-4zM1086 212h4v4h-4zM1086 220h4v4h-4zM1086 228h4v4h-4z" fill="#a0a0a0"/><path d="M1086 172h2v2h-2zM1086 180h2v2h-2zM1086 188h2v2h-2zM1086 196h2v2h-2zM1086 204h2v2h-2zM1086 212h2v2h-2zM1086 220h2v2h-2zM1086 228h2v2h-2z" fill="#d4d4d4"/>
<path d="M1196 170h4v4h-4zM1196 178h4v4h-4zM1196 186h4v4h-4zM1196 194h4v4h-4zM1196 202h4v4h-4zM1196 210h4v4h-4zM1196 218h4v4h-4zM1196 226h4v4h-4z" fill="#fbfbfb"/><path d="M1198 172h4v4h-4zM1198 180h4v4h-4zM1198 188h4v4h-4zM1198 196h4v4h-4zM1198 204h4v4h-4zM1198 212h4v4h-4zM1198 220h4v4h-4zM1198 228h4v4h-4z" fill="#a0a0a0"/><path d="M1198 172h2v2h-2zM1198 180h2v2h-2zM1198 188h2v2h-2zM1198 196h2v2h-2zM1198 204h2v2h-2zM1198 212h2v2h-2zM1198 220h2v2h-2zM1198 228h2v2h-2z" fill="#d4d4d4"/>
<path d="M1308 170h4v4h-4zM1308 178h4v4h-4zM1308 186h4v4h-4zM1308 194h4v4h-4zM1308 202h4v4h-4zM1308 210h4v4h-4zM1308 218h4v4h-4zM1308 226h4v4h-4z" fill="#fbfbfb"/><path d="M1310 172h4v4h-4zM1310 180h4v4h-4zM1310 188h4v4h-4zM1310 196h4v4h-4zM1310 204h4v4h-4zM1310 212h4v4h-4zM1310 220h4v4h-4zM1310 228h4v4h-4z" fill="#a0a0a0"/><path d="M1310 172h2v2h-2zM1310 180h2v2h-2zM1310 188h2v2h-2zM1310 196h2v2h-2zM1310 204h2v2h-2zM1310 212h2v2h-2zM1310 220h2v2h-2zM1310 228h2v2h-2z" fill="#d4d4d4"/>
<path d="M1420 170h4v4h-4zM1420 178h4v4h-4zM1420 186h4v4h-4zM1420 194h4v4h-4zM1420 202h4v4h-4zM1420 210h4v4h-4zM1420 218h4v4h-4zM1420 226h4v4h-4z" fill="#fbfbfb"/><path d="M1422 172h4v4h-4zM1422 180h4v4h-4zM1422 188h4v4h-4zM1422 196h4v4h-4zM1422 204h4v4h-4zM1422 212h4v4h-4zM1422 220h4v4h-4zM1422 228h4v4h-4z" fill="#a0a0a0"/><path d="M1422 172h2v2h-2zM1422 180h2v2h-2zM1422 188h2v2h-2zM1422 196h2v2h-2zM1422 204h2v2h-2zM1422 212h2v2h-2zM1422 220h2v2h-2zM1422 228h2v2h-2z" fill="#d4d4d4"/>
<path d="M832 200h10v2h-10zM834 202h6v2h-6zM836 204h2v2h-2z" fill="#000"/>
<path d="M944 200h10v2h-10zM946 202h6v2h-6zM948 204h2v2h-2z" fill="#000"/>
<path d="M1056 200h10v2h-10zM1058 202h6v2h-6zM1060 204h2v2h-2z" fill="#000"/>
<path d="M1168 200h10v2h-10zM1170 202h6v2h-6zM1172 204h2v2h-2z" fill="#000"/>
<path d="M1280 200h10v2h-10zM1282 202h6v2h-6zM1284 204h2v2h-2z" fill="#000"/>
<path d="M1392 200h10v2h-10zM1394 202h6v2h-6zM1396 204h2v2h-2z" fill="#a0a0a0"/>
<path d="M1534 198h10v2h-10zM1536 200h6v2h-6zM1538 202h2v2h-2z" fill="#000"/>
<path d="M1606 198h10v2h-10zM1608 200h6v2h-6zM1610 202h2v2h-2z" fill="#000"/>
<path d="M1686 198h10v2h-10zM1688 200h6v2h-6zM1690 202h2v2h-2z" fill="#000"/>
<path d="M1766 198h10v2h-10zM1768 200h6v2h-6zM1770 202h2v2h-2z" fill="#000"/>
<g shape-rendering="geometricPrecision"><path d="M54.5 204 V187 Q54.5 184.5 57.5 184.5 Q60.5 184.5 60.5 187 V183.5 Q60.5 181 64 181 Q67 181 67 183.5 V185 Q67 182.8 70 182.8 Q73.5 182.8 73.5 185.5 V188.5 Q73.5 186.5 76.5 186.5 Q79.5 186.5 79.5 189.5 V216 L73.5 223 H58.5 L46 202.5 Q44 198.5 46.5 197.3 Q49.5 196 51.5 199.5 Z" fill="url(#hnd)" stroke="#5e5e72" stroke-width="2" stroke-linejoin="round" filter="url(#c4)"/><rect x="60" y="186" width="2" height="14" fill="#5e5e72"/><rect x="66" y="186" width="2" height="14" fill="#5e5e72"/><rect x="72" y="188" width="2" height="12" fill="#5e5e72"/></g>
<path d="M122 180h2v2h-2zM122 208h2v2h-2zM126 180h2v2h-2zM126 208h2v2h-2zM130 180h2v2h-2zM130 208h2v2h-2zM134 180h2v2h-2zM134 208h2v2h-2zM138 180h2v2h-2zM138 208h2v2h-2zM142 180h2v2h-2zM142 208h2v2h-2zM146 180h2v2h-2zM146 208h2v2h-2zM150 180h2v2h-2zM150 208h2v2h-2zM118 184h2v2h-2zM154 184h2v2h-2zM118 188h2v2h-2zM154 188h2v2h-2zM118 192h2v2h-2zM154 192h2v2h-2zM118 196h2v2h-2zM154 196h2v2h-2zM118 200h2v2h-2zM154 200h2v2h-2zM118 204h2v2h-2zM154 204h2v2h-2zM119 181h2v2h-2zM153 181h2v2h-2zM119 207h2v2h-2zM153 207h2v2h-2z" fill="#2c6cb8"/><text x="138" y="220" text-anchor="middle" font-family="Liberation Sans, sans-serif" font-size="50" fill="#003d92">T</text><rect x="148" y="202" width="14" height="2" fill="#003d92"/><rect x="154" y="202" width="2" height="22" fill="#003d92"/><rect x="148" y="222" width="14" height="2" fill="#003d92"/><path d="M198 180h2v2h-2zM198 208h2v2h-2zM202 180h2v2h-2zM202 208h2v2h-2zM206 180h2v2h-2zM206 208h2v2h-2zM210 180h2v2h-2zM210 208h2v2h-2zM214 180h2v2h-2zM214 208h2v2h-2zM218 180h2v2h-2zM218 208h2v2h-2zM222 180h2v2h-2zM222 208h2v2h-2zM226 180h2v2h-2zM226 208h2v2h-2zM194 184h2v2h-2zM230 184h2v2h-2zM194 188h2v2h-2zM230 188h2v2h-2zM194 192h2v2h-2zM230 192h2v2h-2zM194 196h2v2h-2zM230 196h2v2h-2zM194 200h2v2h-2zM230 200h2v2h-2zM194 204h2v2h-2zM230 204h2v2h-2zM195 181h2v2h-2zM229 181h2v2h-2zM195 207h2v2h-2zM229 207h2v2h-2z" fill="#2c6cb8"/><path d="M216 191.5 L238.5 214 L238.5 215.5 L226 215.5 L216 224.5 Z" fill="#003d92"/>
<g shape-rendering="geometricPrecision"><g filter="url(#c4)"><path d="M269 188.5 L280.5 187 V185 H314 L315 187 V211.5 L290 221 H276 L269 216 Z" fill="url(#camB)" stroke="#38387c" stroke-width="2" stroke-linejoin="round"/><path d="M282 187 H314 V191 H282 Z" fill="#dcdcf8"/><rect x="288" y="188" width="14" height="2.4" fill="#ffffff"/><rect x="304" y="190" width="8" height="4" fill="#f4f470"/><rect x="284" y="186" width="6" height="2" fill="#38387c"/><path d="M281 193 H296 V199 H281 Z" fill="#40408c"/><circle cx="300" cy="204.5" r="10" fill="url(#camL)"/><rect x="298" y="200" width="6" height="8" fill="#000"/><rect x="300" y="201" width="2" height="3" fill="#e8e8e8"/></g><g filter="url(#c4)"><rect x="354" y="182" width="10" height="7" fill="#333333"/><rect x="372" y="182" width="10" height="7" fill="#333333"/><rect x="356" y="184" width="3" height="4" fill="url(#binS)"/><rect x="374" y="184" width="3" height="4" fill="url(#binS)"/><rect x="362" y="188" width="12" height="12" fill="#333333"/><rect x="364" y="190" width="4" height="8" fill="url(#binS)"/><rect x="350.8" y="188.8" width="11.4" height="10.4" fill="url(#binB)" stroke="#34347e" stroke-width="1.5"/><rect x="373.8" y="188.8" width="11.4" height="10.4" fill="url(#binB)" stroke="#34347e" stroke-width="1.5"/><rect x="349" y="198.2" width="14.5" height="1.8" fill="#34347e"/><rect x="372.5" y="198.2" width="14.5" height="1.8" fill="#34347e"/><path d="M350.8 200 H363.2 L365.2 212 H348.8 Z" fill="url(#binB)" stroke="#34347e" stroke-width="1.5"/><path d="M372.8 200 H385.2 L387.2 212 H370.8 Z" fill="url(#binB)" stroke="#34347e" stroke-width="1.5"/><rect x="348" y="212" width="18" height="10" fill="#333333"/><rect x="370" y="212" width="18" height="10" fill="#333333"/><rect x="350" y="214" width="8" height="6" fill="url(#binS)"/><rect x="372" y="214" width="8" height="6" fill="url(#binS)"/></g></g>
<rect x="455" y="181" width="34" height="42" fill="url(#docg2)" stroke="#003d92" stroke-width="2"/><rect x="462" y="188" width="20" height="4" fill="#003d92"/><rect x="462" y="196" width="20" height="4" fill="#003d92"/><rect x="462" y="204" width="20" height="4" fill="#003d92"/><rect x="462" y="212" width="20" height="4" fill="#003d92"/>
<g shape-rendering="geometricPrecision"><rect x="527" y="181" width="26" height="34" fill="url(#docg2)" stroke="#003d92" stroke-width="2"/><rect x="532" y="188" width="16" height="4" fill="#003d92"/><rect x="532" y="196" width="16" height="4" fill="#003d92"/><rect x="532" y="204" width="16" height="4" fill="#003d92"/><path d="M553.5 191.3 Q560.5 190.5 563 197.5 L569 210" fill="none" stroke="#0c4aa4" stroke-width="2.8" filter="url(#c4)"/><path d="M563 208.5 L572 206 L572 218.5 Z" fill="#003d92" filter="url(#c4)"/></g>
<path d="M603 181 H645 V205 H629 V223 H603 Z" fill="url(#stk)" stroke="#9c6000" stroke-width="2" stroke-linejoin="miter"/><path d="M630 206 H646 L630 222.5 Z" fill="url(#stkF)"/><path d="M644 206h2v2h-2zM642 208h2v2h-2zM640 210h2v2h-2zM638 212h2v2h-2zM636 214h2v2h-2zM634 216h2v2h-2zM632 218h2v2h-2zM630 220h2v2h-2zM642 206h2v2h-2zM640 208h2v2h-2zM638 210h2v2h-2zM636 212h2v2h-2zM634 214h2v2h-2zM632 216h2v2h-2zM630 218h2v2h-2z" fill="#9c6000"/><rect x="628" y="222" width="4" height="2" fill="#9c6000"/>
<g shape-rendering="geometricPrecision"><g filter="url(#c4)"><rect x="676" y="188" width="48" height="6" fill="#3a3a3a"/><rect x="682" y="186" width="6" height="2" fill="#4a4a4a"/><rect x="712" y="186" width="6" height="2" fill="#4a4a4a"/><rect x="678" y="194" width="44" height="4" fill="#8c8c84"/><rect x="676" y="198" width="48" height="20" fill="#74746c"/><rect x="678" y="198" width="44" height="6" fill="#3a3a3a"/><rect x="682" y="204" width="36" height="10" fill="#3a3a3a"/><rect x="678" y="214" width="44" height="6" fill="#6c6c64"/><path d="M689 181 H704 L709 186 V193 H689 Z" fill="#fff" stroke="#6a94f0" stroke-width="2"/><path d="M704 181 V186 H709 Z" fill="#7aa2f4" stroke="#6a94f0" stroke-width="1.6"/></g><path d="M686 206h2v2h-2zM690 206h2v2h-2zM694 206h2v2h-2zM698 206h2v2h-2zM702 206h2v2h-2zM706 206h2v2h-2zM710 206h2v2h-2zM688 210h2v2h-2zM692 210h2v2h-2zM696 210h2v2h-2zM700 210h2v2h-2zM704 210h2v2h-2zM708 210h2v2h-2zM712 210h2v2h-2z" fill="#fff"/></g>
<rect x="778" y="184" width="36" height="36" fill="none" stroke="#003d92" stroke-width="4"/><rect x="886" y="192" width="44" height="18" fill="#ffe23c"/><text transform="translate(908 215.8) scale(0.955 1)" x="0" y="0" text-anchor="middle" font-family="Liberation Sans, sans-serif" font-size="48.8" fill="#003d92">A</text>
<g shape-rendering="geometricPrecision"><g filter="url(#c4)"><path d="M1003 201 L1022.5 190.5 L1041 204.5 L1008 225 L1003 219.5 Z" fill="url(#stBase)" stroke="#6a4a8c" stroke-width="1.5" stroke-dasharray="2 1.2" stroke-linejoin="round"/><path d="M1004.5 217.5 L1037.5 203.5 L1040 205.5 L1008.5 224 L1004.5 219.5 Z" fill="#f6f6ff"/><path d="M1004.5 215 L1036.5 202.3 L1037.5 203.5 L1004.5 217.5 Z" fill="#bcbce0"/><path d="M1003.5 194 L1012 190 L1020.5 199 V205 L1013.5 208 L1007 205 Z" fill="#a8502c"/><ellipse cx="1007.8" cy="187.3" rx="9.8" ry="9.4" fill="url(#stB)"/></g><rect x="1115" y="181" width="34" height="42" fill="url(#docg2)" stroke="#003d92" stroke-width="2"/><g filter="url(#c4)"><rect x="1120" y="190" width="24" height="12" fill="url(#sky)"/><path d="M1120 198 L1124 195 L1128 192.5 L1132 195 L1134 197 L1140 195.5 L1144 197 V203 H1120 Z" fill="#a49ce0"/><path d="M1125.5 194.5 L1128 192.5 L1130.5 194.5 Z" fill="#ece8ff"/><rect x="1136" y="197" width="8" height="4" fill="#6888c0"/><rect x="1120" y="202" width="24" height="8" fill="url(#grs)"/></g></g>
<path d="M1230 188h26v2h-26zM1234 192h22v2h-22zM1238 196h18v2h-18zM1242 200h14v2h-14zM1246 204h10v2h-10zM1250 208h6v2h-6zM1254 212h2v2h-2zM1230 192h4v2h-4zM1232 194h4v2h-4zM1234 196h4v2h-4zM1236 198h4v2h-4zM1238 200h4v2h-4zM1240 202h4v2h-4zM1242 204h4v2h-4zM1244 206h4v2h-4zM1246 208h4v2h-4zM1248 210h4v2h-4zM1250 212h4v2h-4zM1252 214h4v2h-4zM1256 192h2v24h-2z" fill="#003d92"/><rect x="1225" y="187" width="4" height="4" fill="#f0f0f0" stroke="#003d92" stroke-width="2"/><rect x="1255" y="187" width="4" height="4" fill="#f0f0f0" stroke="#003d92" stroke-width="2"/><rect x="1255" y="217" width="4" height="4" fill="#f0f0f0" stroke="#003d92" stroke-width="2"/><rect x="1256" y="182" width="2" height="4" fill="#003d92"/><rect x="1260" y="188" width="4" height="2" fill="#003d92"/><rect x="1336" y="180" width="4" height="46" fill="#8c8c8c"/><rect x="1344" y="184" width="22" height="10" fill="#8c8c8c"/><rect x="1344" y="198" width="30" height="10" fill="#8c8c8c"/><rect x="1344" y="212" width="20" height="10" fill="#8c8c8c"/>
<g shape-rendering="geometricPrecision"><g filter="url(#c4)"><path d="M1451 204 L1457 198 L1464 191 L1476 203 L1463 215 Z" fill="url(#bkt)" stroke="#000080" stroke-width="2" stroke-linejoin="miter"/><path d="M1454 204 L1460 198 L1466 204 L1462 211 Z" fill="#c0c0c0"/><path d="M1457 199 V191 Q1457 189 1459 189 H1462 Q1464 189 1465 191 V202" fill="none" stroke="#000080" stroke-width="2"/></g><rect x="1476" y="204" width="6" height="10" fill="#c2c2c2"/><rect x="1476" y="202" width="2" height="2" fill="#c8c8c8"/><rect x="1478" y="214" width="2" height="2" fill="#c2c2c2"/></g>
<rect x="1491" y="185" width="30" height="34" fill="#c4c4c4" stroke="#a6a6a6" stroke-width="2"/><rect x="1563" y="185" width="30" height="34" fill="#c3c3c3" stroke="#a6a6a6" stroke-width="2"/><rect x="1571" y="193" width="14" height="18" fill="#f0f0f0" stroke="#a6a6a6" stroke-width="2"/><rect x="1636" y="186" width="40" height="4" fill="#8a8a8a"/><rect x="1636" y="196" width="40" height="6" fill="#8a8a8a"/><rect x="1636" y="208" width="40" height="10" fill="#8a8a8a"/><rect x="1718" y="184" width="12" height="12" fill="#8a8a8a"/><rect x="1730" y="184" width="12" height="12" fill="#dcdcdc"/><rect x="1742" y="184" width="12" height="12" fill="#8a8a8a"/><rect x="1718" y="196" width="12" height="12" fill="#dcdcdc"/><rect x="1730" y="196" width="12" height="12" fill="#8a8a8a"/><rect x="1742" y="196" width="12" height="12" fill="#dcdcdc"/><rect x="1718" y="208" width="12" height="12" fill="#8a8a8a"/><rect x="1730" y="208" width="12" height="12" fill="#dcdcdc"/><rect x="1742" y="208" width="12" height="12" fill="#8a8a8a"/>
</svg>
</div>
<div class="abs" id="frame"></div>
</body></html>
